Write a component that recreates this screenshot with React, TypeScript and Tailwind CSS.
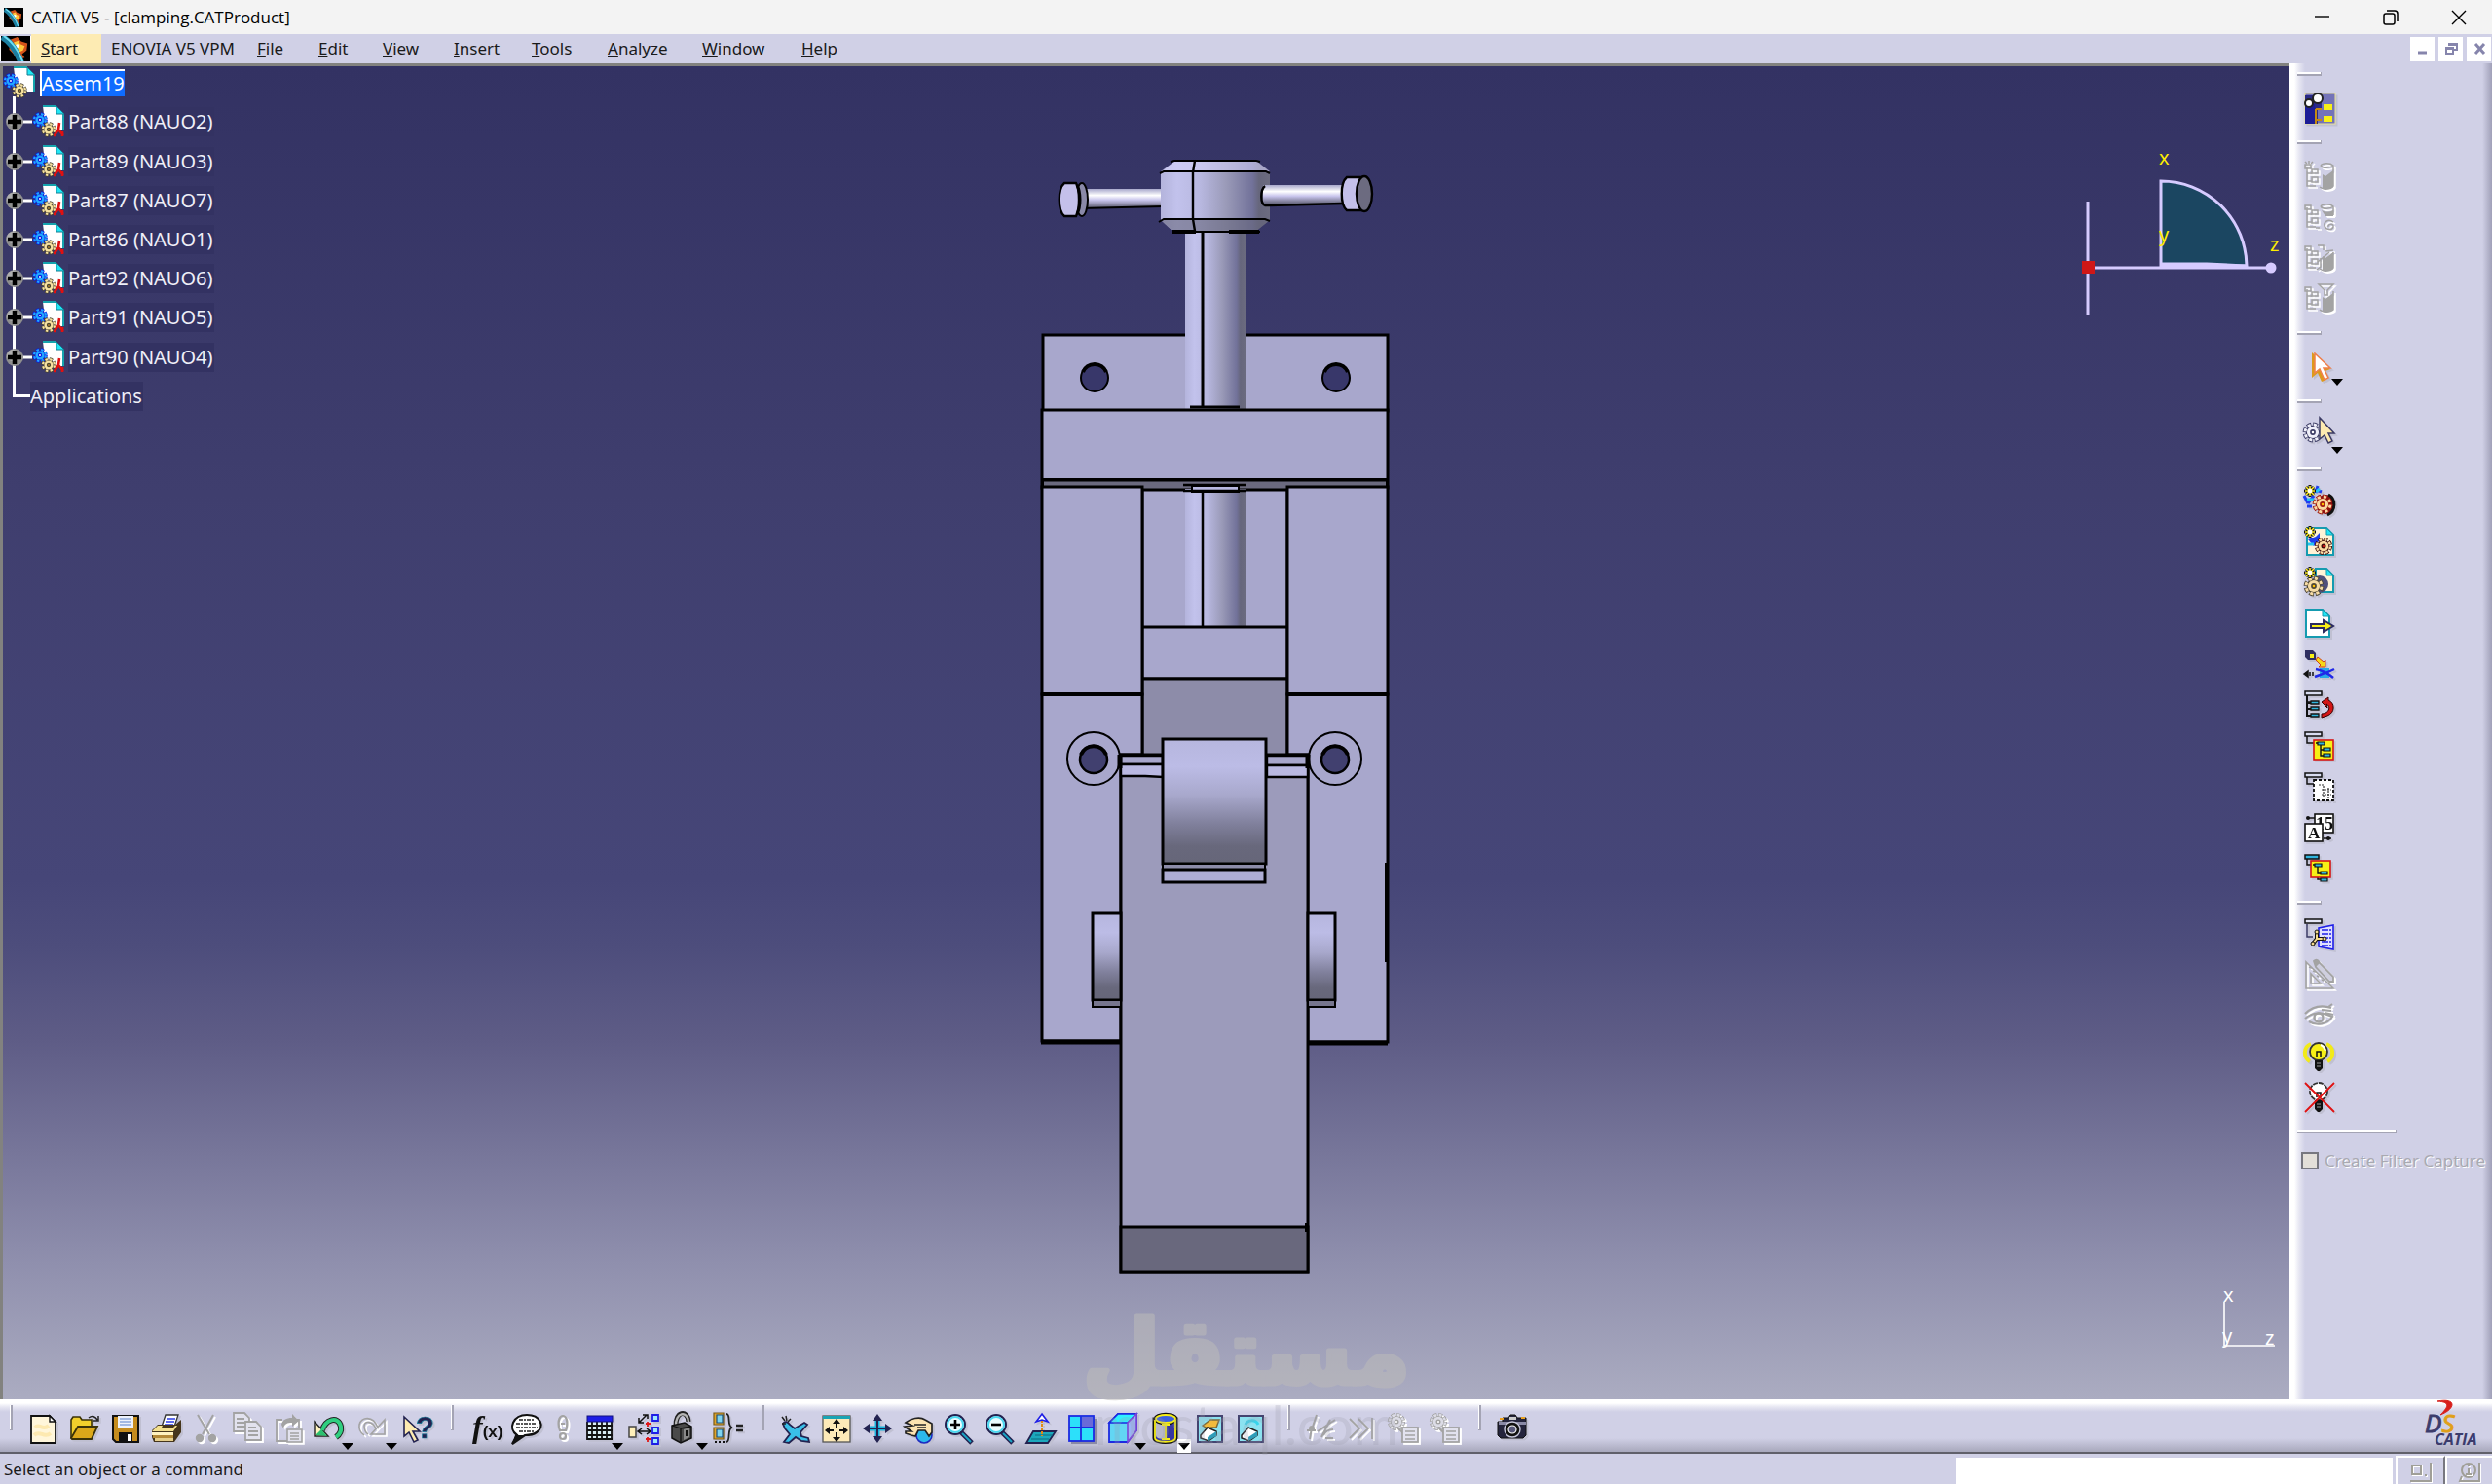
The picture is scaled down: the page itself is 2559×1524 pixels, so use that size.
import React from "react";

type Kids = { children?: React.ReactNode };

/* ---------- icon helpers ---------- */

function Icon({ children, off = false, size = 32 }: Kids & { off?: boolean; size?: number }) {
  return (
    <svg
      aria-hidden="true"
      width={size}
      height={size}
      viewBox={`0 0 ${size} ${size}`}
      fill="none"
      className={
        off
          ? "shrink-0 overflow-visible drop-shadow-[2px_2px_0_#ffffff]"
          : "shrink-0 overflow-visible drop-shadow-[2px_2px_0_#c0c0d2]"
      }
    >
      {children}
    </svg>
  );
}

function Gear({ x, y, r, fill, line, hole = "#fff" }: { x: number; y: number; r: number; fill: string; line: string; hole?: string }) {
  const t = (Math.PI * 2 * r) / 16;
  return (
    <g>
      <circle cx={x} cy={y} r={r} stroke={line} strokeWidth={r * 0.6} strokeDasharray={`${t * 1.4} ${t * 0.6}`} />
      <circle cx={x} cy={y} r={r * 0.92} fill={line} />
      <circle cx={x} cy={y} r={r} stroke={fill} strokeWidth={r * 0.36} strokeDasharray={`${t} ${t}`} strokeDashoffset={-t * 0.2} />
      <circle cx={x} cy={y} r={r * 0.76} fill={fill} />
      <circle cx={x} cy={y} r={r * 0.36} fill={line} />
      <circle cx={x} cy={y} r={r * 0.16} fill={hole} />
    </g>
  );
}

function Spark({ x, y }: { x: number; y: number }) {
  return (
    <g>
      <path d={`M${x - 6} ${y}h12M${x} ${y - 6}v12M${x - 4} ${y - 4}l8 8M${x + 4} ${y - 4}l-8 8`} stroke="#111" strokeWidth="3" />
      <path d={`M${x - 5} ${y}h10M${x} ${y - 5}v10M${x - 4} ${y - 4}l8 8M${x + 4} ${y - 4}l-8 8`} stroke="#ffee20" strokeWidth="1.6" />
      <circle cx={x} cy={y} r="2.4" fill="#fff" />
    </g>
  );
}

function SheetShape({ x, y, w, h, line = "#159bb0", fill = "#fff", fold = "#22e6f5" }: { x: number; y: number; w: number; h: number; line?: string; fill?: string; fold?: string }) {
  return (
    <g>
      <path d={`M${x} ${y}h${w - 7}l7 7v${h - 7}h${-w}z`} fill={fill} stroke={line} strokeWidth="2" />
      <path d={`M${x + w - 7} ${y}v7h7z`} fill={fold} stroke={line} strokeWidth="1" />
    </g>
  );
}

function TreeHead({ fill = "#d8dcf0" }: { fill?: string }) {
  return (
    <>
      <path d="M3 6v7h9" stroke="#111" strokeWidth="1.5" />
      <rect x="1" y="2" width="17" height="4" fill={fill} stroke="#111" strokeWidth="1.5" />
    </>
  );
}

const GREY = "#a3a3a3";

/* ---------- right tool bar icons ---------- */

const DbDisabled = ({ kind }: { kind: number }) => (
  <Icon off>
    <g stroke={GREY} strokeWidth="1.5">
      <path d="M3 6v20h9M3 13h5M3 21h5" />
      <rect x="1" y="4" width="6" height="4" />
      <rect x="8" y="9" width="6" height="4" />
      <rect x="8" y="17" width="6" height="5" />
      {kind === 0 && <path d="M5 0v3M1 1l2 2M9 1L7 3M17 5c2-3 10-3 13 0v21c-3 4-10 4-14 1M17 5c2 3 10 3 13 0" />}
      {kind === 1 && <path d="M17 5c2-3 10-3 13 0v9M17 5c2 3 10 3 13 0M30 21c-5-4-10 0-9 4s8 5 9 1-6-3-5 0M12 27h4" />}
      {kind === 2 && <path d="M14 3h6v5M14 20l12-10M22 9l8-1M17 16v9l-4 3M30 10v16c-3 4-10 4-14 1" />}
      {kind === 3 && <path d="M15 1h15l-6 6v5h-3V7zM16 27c3 3 11 3 14 0V8" />}
    </g>
    {kind !== 1 && <path d="M19 14l3 2 8-6v17c-2 2-7 3-11 2z" fill={GREY} />}
    {kind === 1 && <path d="M18 9c4 2 8 2 12 0v6h-8z" fill={GREY} />}
  </Icon>
);

const WorkbenchIcon = () => (
  <Icon>
    <rect x="1" y="1" width="31" height="31" fill="#7473b8" stroke="#e8e29a" strokeWidth="1" />
    <path d="M1 3h17v14h-4v15H1z" fill="#2a2a86" />
    <path d="M1 12h10v20H1z" fill="#1d1d96" />
    <rect x="20" y="12" width="9" height="6" fill="#f7ef16" />
    <rect x="20" y="24" width="9" height="6" fill="#f7ef16" />
    <path d="M12 17h6M12 17v15M12 28h6" stroke="#c48a12" strokeWidth="2" />
    <circle cx="14" cy="6" r="5" fill="#fff" stroke="#222" strokeWidth="2" />
    <circle cx="5" cy="11" r="4" fill="#fff" stroke="#222" strokeWidth="2" />
  </Icon>
);

const ArrowIcon = () => (
  <Icon>
    <path d="M8 1v26l6-5 4 9 5-2-4-8 8-3z" fill="#dd9a1c" />
    <path d="M11 2v20l5-4 5 11 4-2-5-10h7z" fill="#fff" stroke="#f0804c" strokeWidth="1.5" />
  </Icon>
);

const GearCursorIcon = () => (
  <Icon>
    <Gear x={9} y={13} r={8} fill="#f0f0fa" line="#3b3b64" />
    <path d="M16 -2v22l5-4 4 8 4-2-4-8h6z" fill="#fdeab0" stroke="#3b3b64" strokeWidth="1.5" />
  </Icon>
);

const rightGroupFive: [string, React.ReactNode][] = [
  ["Component", (
    <Icon>
      <path d="M14 1l-2 7M12 5l6 2M0 11l4 8M4 19l6-8M3 22h5" stroke="#1f3ff0" strokeWidth="3" />
      <path d="M3 15l7 0M12 7l4-3" stroke="#24c4f4" strokeWidth="3" />
      <circle cx="22" cy="20" r="10" fill="#8a1010" />
      <path d="M25 10c8 4 8 17-1 21" stroke="#111" strokeWidth="3" />
      <Gear x={19} y={20} r={8} fill="#fbd9a0" line="#a01a10" hole="#ffbf00" />
      <Spark x={6} y={6} />
    </Icon>
  )],
  ["Product", (
    <Icon>
      <SheetShape x={3} y={2} w={27} h={28} fill="#fff3d6" />
      <path d="M4 14l8-3 4-4v8l-6 6z" fill="#1f3ff0" />
      <path d="M4 19h6" stroke="#24c4f4" strokeWidth="3" />
      <Gear x={20} y={21} r={7} fill="#fbd9a0" line="#3a0a0a" hole="#e01818" />
      <Spark x={6} y={6} />
    </Icon>
  )],
  ["Part", (
    <Icon>
      <SheetShape x={12} y={2} w={18} h={24} fill="#fff3d6" />
      <circle cx="16" cy="18" r="9" fill="#50507a" />
      <Gear x={10} y={20} r={8} fill="#f7dca4" line="#4d4636" hole="#ffbf00" />
      <Spark x={6} y={6} />
    </Icon>
  )],
  ["Existing Component", (
    <Icon>
      <SheetShape x={2} y={2} w={24} h={28} />
      <path d="M7 17h13v-4l10 6-10 6v-4H7z" fill="#f7ef16" stroke="#2b2b60" strokeWidth="2" />
    </Icon>
  )],
  ["Existing Component With Positioning", (
    <Icon>
      <path d="M1 2h8l3 3v7H4L1 9z" fill="#2f2f60" />
      <rect x="6" y="6" width="4" height="4" fill="#f7ef16" />
      <path d="M14 9l6 5 2-2v7h-7l2-2-5-5z" fill="#f7d816" stroke="#d04018" strokeWidth="1" />
      <rect x="16" y="20" width="10" height="10" fill="#28a8e8" />
      <path d="M11 29c8-3 14-5 20-8M12 21c6 1 12 4 18 9" stroke="#1f28e8" strokeWidth="2.5" />
      <path d="M0 26l4-3v6zM6 24v4M9 24v4" fill="#111" stroke="#111" strokeWidth="1.5" />
    </Icon>
  )],
  ["Replace Component", (
    <Icon>
      <TreeHead />
      <path d="M3 6v21h5M3 14h4M3 20h4" stroke="#111" strokeWidth="2" />
      <path d="M7 12h8v3H7zM7 18h8v3H7zM7 25h8v3H7z" fill="#30b4dc" stroke="#111" strokeWidth="1.3" />
      <path d="M18 13l7-5v3c7 3 7 13-1 16l-6 2v-4c8 0 10-8 5-10l1 4z" fill="#d41616" stroke="#300" strokeWidth="1" />
    </Icon>
  )],
  ["Graph Tree Reordering", (
    <Icon>
      <TreeHead />
      <rect x="10" y="10" width="20" height="20" fill="#f7ef16" stroke="#d41616" strokeWidth="1.6" />
      <path d="M12 13h4M17 15v11h4M17 20h4" stroke="#111" strokeWidth="1.4" />
      <path d="M14 12h7v3h-7zM20 18h7v3h-7zM20 24h7v3h-7z" fill="#30b4dc" stroke="#111" strokeWidth="1.2" />
    </Icon>
  )],
  ["Generate Numbering", (
    <Icon>
      <TreeHead />
      <rect x="10" y="9" width="20" height="21" fill="#fff" stroke="#111" strokeWidth="1.8" strokeDasharray="3 2" />
      <path d="M15 14h6M18 19h10M18 24h10M20 15v12M25 17v10" stroke="#333" strokeWidth="1.2" strokeDasharray="2 1" />
    </Icon>
  )],
  ["Selective Load", (
    <Icon>
      <rect x="11" y="2" width="19" height="19" fill="#fff" stroke="#111" strokeWidth="1.6" />
      <text x="12" y="18" fontSize="18" fontWeight="700" fill="#111" fontFamily="Liberation Serif, serif">15</text>
      <path d="M3 6h8M20 27h8" stroke="#111" strokeWidth="1.4" />
      <circle cx="4" cy="6" r="2" fill="#111" />
      <circle cx="25" cy="27" r="2" fill="#111" />
      <rect x="1" y="12" width="18" height="18" fill="#fff" stroke="#111" strokeWidth="1.6" />
      <text x="4" y="27" fontSize="17" fontWeight="700" fill="#111" fontFamily="Liberation Serif, serif">A</text>
    </Icon>
  )],
  ["Manage Representations", (
    <Icon>
      <path d="M3 6v6h7M14 24v3h6" stroke="#111" strokeWidth="1.5" />
      <rect x="1" y="2" width="14" height="4" fill="#30b4dc" stroke="#111" strokeWidth="1.5" />
      <rect x="7" y="8" width="20" height="17" fill="#f7ef16" stroke="#d41616" strokeWidth="1.6" />
      <path d="M9 12h4M14 14v7h4" stroke="#111" strokeWidth="1.4" />
      <path d="M11 11h7v3h-7zM17 19h7v3h-7zM17 26h7v3h-7z" fill="#30b4dc" stroke="#111" strokeWidth="1.2" />
    </Icon>
  )],
];

const rightGroupSix: [string, React.ReactNode][] = [
  ["Constraints", (
    <Icon>
      <path d="M3 6v13h6" stroke="#3b3b64" strokeWidth="1.5" />
      <rect x="1" y="1" width="17" height="4" fill="#e4e6f6" stroke="#111" strokeWidth="1.5" />
      <path d="M30 7v25l-15-3V10z" fill="#dfe0ff" stroke="#1f20e8" strokeWidth="1.6" />
      <path d="M18 12h10M18 16h10M18 20h10M18 24h10M18 28h10" stroke="#1f20e8" strokeWidth="1.3" strokeDasharray="3 1" />
      <path d="M9 26l4-5v-7M13 21h8" stroke="#111" strokeWidth="4" />
      <path d="M9 26l4-5v-7M13 21h8" stroke="#f7dc8c" strokeWidth="2" />
      <circle cx="9" cy="26" r="2" fill="#f7dc8c" stroke="#111" />
      <circle cx="13" cy="14" r="2" fill="#f7dc8c" stroke="#111" />
      <circle cx="21" cy="21" r="2" fill="#f7dc8c" stroke="#111" />
    </Icon>
  )],
  ["Measure", (
    <Icon off>
      <path d="M2 3v27h28zM7 15v10h10z" stroke={GREY} strokeWidth="1.6" />
      <path d="M10 2c3-3 5 0 6 2l14 14v5h-4L12 8z" fill="#cfcfdf" stroke={GREY} strokeWidth="1.8" />
      <path d="M10 2c3-3 5 0 6 2l-4 4z" fill={GREY} />
      <path d="M5 8l3 1M9 12l3 1M13 17l2 1M18 21l2 1" stroke={GREY} strokeWidth="1.4" />
    </Icon>
  )],
  ["View Visibility", (
    <Icon off>
      <path d="M1 14c8-8 18-9 27-6M1 19c8-7 16-7 28-2-5 8-16 10-24 5" stroke={GREY} strokeWidth="2.2" />
      <circle cx="15" cy="18" r="4.5" stroke={GREY} strokeWidth="2.4" />
      <path d="M18 10l10 1M21 13l9 2M25 7l4-3" stroke={GREY} strokeWidth="2" />
    </Icon>
  )],
  ["Show Light", (
    <Icon>
      <path d="M7 3C-1 6-1 17 6 21M23 3c8 3 8 14 1 18" stroke="#f2ea18" strokeWidth="4" />
      <circle cx="15" cy="11" r="9" fill="#f7ef16" stroke="#333" strokeWidth="1.8" />
      <path d="M13 17v-6h4v6" stroke="#111" strokeWidth="1.5" />
      <path d="M17 4c3 1 4 3 5 6" stroke="#fff" strokeWidth="2" />
      <path d="M11 20h8v8l-3 3h-2l-3-3z" fill="#111" />
      <path d="M13 23h4M13 26h4" stroke="#999" />
    </Icon>
  )],
  ["Hide Light", (
    <Icon>
      <circle cx="15" cy="10" r="9" fill="#fff" stroke="#333" strokeWidth="1.8" strokeDasharray="5 1" />
      <path d="M13 16v-5h4v5" stroke="#111" strokeWidth="1.5" />
      <path d="M11 19h8v9l-3 3h-2l-3-3z" fill="#111" />
      <path d="M13 23h4M13 26h4" stroke="#999" />
      <path d="M1 1l30 30M31 1L1 31" stroke="#e01212" strokeWidth="1.8" />
    </Icon>
  )],
];

/* ---------- bottom tool bar icons ---------- */

const Caret = ({ boxed = false }: { boxed?: boolean }) => (
  <svg aria-hidden="true" viewBox="0 0 14 14" className={boxed ? "absolute -right-[7px] top-[29px] size-[14px] bg-white" : "absolute -right-[7px] top-[29px] size-[14px]"}>
    <path d="M1 4h12L7 11z" fill="#000" />
  </svg>
);

const Lens = ({ plus }: { plus: boolean }) => (
  <Icon>
    <path d="M18 19l11 11" stroke="#222250" strokeWidth="5" />
    <path d="M19 20l9 9" stroke="#19a4c4" strokeWidth="2" />
    <circle cx="12" cy="11" r="10" fill="#eafcff" stroke="#222250" strokeWidth="2" />
    <circle cx="12" cy="11" r="8" stroke="#49d8f0" strokeWidth="2" />
    <path d={plus ? "M7 11h10M12 6v10" : "M7 11h10"} stroke="#000" strokeWidth="2.6" />
  </Icon>
);

const Doc = ({ x, y }: { x: number; y: number }) => (
  <g stroke={GREY} strokeWidth="1.8">
    <path d={`M${x} ${y}h11l5 5v14h-16z`} fill="#e2e2ee" />
    <path d={`M${x + 3} ${y + 6}h8M${x + 3} ${y + 10}h10M${x + 3} ${y + 14}h10`} />
  </g>
);

const GearDocOff = ({ x }: { x: number }) => (
  <Icon off>
    <Gear x={9 + x} y={8} r={7} fill="#dcdce6" line={GREY} />
    <path d="M10 14l6 6" stroke={GREY} strokeWidth="2" />
    <rect x="15" y="14" width="16" height="15" fill="#e2e2ee" stroke={GREY} strokeWidth="1.8" />
    <path d="M18 18h10M18 22h10M18 26h10" stroke={GREY} strokeWidth="1.6" />
  </Icon>
);

type Tool = { name: string; icon: React.ReactNode; caret?: boolean; boxed?: boolean; off?: boolean; slim?: boolean };

const bottomGroups: Tool[][] = [
  [
    { name: "New", icon: <Icon><path d="M3 2h19l6 6v22H3z" fill="#fff6da" stroke="#111" strokeWidth="1.8" /><path d="M22 2v6h6z" fill="#fff" stroke="#111" strokeWidth="1.4" /><path d="M7 14c4-5 8 4 14-2M6 22c6-6 10 4 17-2" stroke="#fde9b0" strokeWidth="4" /></Icon> },
    { name: "Open", icon: <Icon><path d="M2 25V6l2-3h7l2 3h10v7" fill="#f1cf2c" stroke="#3a3208" strokeWidth="1.6" /><path d="M2 25l7-12h20l-6 13H3z" fill="#dba81a" stroke="#3a3208" strokeWidth="1.8" /><path d="M20 4c4-3 7-1 9 2M30 2v5h-5" stroke="#222" strokeWidth="1.5" /></Icon> },
    { name: "Save", icon: <Icon><path d="M3 2h26v27H6l-3-3z" fill="#c58c1e" stroke="#111" strokeWidth="2" /><rect x="8" y="2" width="16" height="12" fill="#eef2fb" /><path d="M10 5h12M10 8h12M10 11h12" stroke="#8aa6dc" strokeWidth="1.3" /><rect x="9" y="19" width="14" height="10" fill="#111" /><rect x="18" y="21" width="4" height="7" fill="#fff" /></Icon> },
    { name: "Print", icon: <Icon><path d="M11 13L15 1h13l-4 12z" fill="#fff" stroke="#333" strokeWidth="1.3" /><path d="M16 5h9M15 8h9M14 11h9" stroke="#2d3ce8" strokeWidth="1.6" /><path d="M1 17l6-6h18l6-5v13l-7 10H3l-2-5z" fill="#45351c" /><path d="M1 18l6-6h5l-1 2h12l2-2h2l-4 6z" fill="#f3df8e" /><path d="M1 19h22v3H1z" fill="#fff2c0" /><path d="M2 22h21v3H2z" fill="#b58a38" /><path d="M4 25h19v3H4z" fill="#e6cf8c" /></Icon> },
    { name: "Cut", off: true, icon: <Icon off><path d="M6 1l12 20M22 1L11 21" stroke={GREY} strokeWidth="2" /><circle cx="8" cy="25" r="3" fill={GREY} stroke={GREY} strokeWidth="2.4" /><circle cx="21" cy="25" r="3" fill={GREY} stroke={GREY} strokeWidth="2.4" /></Icon> },
    { name: "Copy", off: true, icon: <Icon off><Doc x={1} y={-1} /><Doc x={13} y={8} /></Icon> },
    { name: "Paste", off: true, icon: <Icon off><path d="M14 28H3V6h6M20 6h6v8" stroke={GREY} strokeWidth="1.8" /><path d="M8 11c1-5 5-7 11-7V0l7 7-7 6V9c-5 0-8 1-9 6z" fill={GREY} /><rect x="14" y="16" width="15" height="13" fill="#e2e2ee" stroke={GREY} strokeWidth="1.6" /><path d="M17 20h9M17 23h9M17 26h9" stroke={GREY} strokeWidth="1.3" /></Icon> },
    { name: "Undo", caret: true, icon: <Icon><path d="M8 17c3-11 16-16 19-4 1 6-2 9-5 11" stroke="#222" strokeWidth="6" /><path d="M0 8l14 15H0z" fill="#fff3c0" stroke="#222" strokeWidth="1.4" /><path d="M1 22l12 1-6-7z" fill="#2bc070" /><path d="M8 17c3-11 16-16 19-4 1 6-2 9-5 11" stroke="#2fcf80" strokeWidth="4" /></Icon> },
    { name: "Redo", caret: true, off: true, icon: <Icon off><path d="M20 14C15 1 3 3 1 11c-1 6 2 9 5 11M18 15C14 7 7 7 6 12c0 4 1 7 4 9M27 6v15H13z" stroke={GREY} strokeWidth="1.6" /></Icon> },
    { name: "What's This?", icon: <Icon><path d="M2 3v20l5-4 5 10 4-2-5-9h7z" fill="#fdeab0" stroke="#222250" strokeWidth="1.6" /><text x="14" y="25" fontSize="31" fontWeight="700" fill="#222250" stroke="#19809c" strokeWidth="0.7" fontFamily="Liberation Sans, sans-serif">?</text></Icon> },
  ],
  [
    { name: "Formula", icon: <Icon><text x="3" y="24" fontSize="32" fontStyle="italic" fontWeight="700" fill="#111" fontFamily="Liberation Serif, serif">f<tspan fontSize="17" fontStyle="normal" fontFamily="Liberation Sans, sans-serif">(x)</tspan></text></Icon> },
    { name: "Comment", icon: <Icon><path d="M7 22C-3 15 3 1 17 1s19 12 10 18c-4 3-9 3-12 3L2 31z" fill="#fff" stroke="#111" strokeWidth="2.2" /><path d="M2 31l3-9 10 0z" fill="#111" /><path d="M9 6h16M6 10h21M6 14h22M9 18h16" stroke="#222" strokeWidth="1.7" strokeDasharray="4 1 2 1" /></Icon> },
    { name: "Check", off: true, slim: true, icon: <Icon off><path d="M8 14c-3-16 11-16 8 0l-1 3H9zM10 10h4" stroke={GREY} strokeWidth="2.2" /><circle cx="12" cy="23" r="3" stroke={GREY} strokeWidth="2.2" /></Icon> },
    { name: "Design Table", caret: true, icon: <Icon><rect x="3" y="2" width="25" height="25" fill="#d9ecf4" /><path d="M3 8v19M8 8v19M13 8v19M18 8v19M23 8v19M28 8v19M3 12h26M3 17h26M3 22h26M3 26h26" stroke="#111" strokeWidth="1.8" /><rect x="3" y="2" width="26" height="6" fill="#1d1de6" stroke="#12127c" /></Icon> },
    { name: "Knowledge Inspector", icon: <Icon><rect x="1" y="13" width="7" height="11" fill="#fff0b8" stroke="#444" strokeWidth="1.5" /><path d="M10 18h12M14 15l-4 3 4 3M19 15l4 3-4 3M11 9l8-8M11 4v5h5M15 1h5v4" stroke="#111" strokeWidth="1.5" /><path d="M18 10h5M20 8v5M18 26h5M20 24v5" stroke="#e01818" strokeWidth="1.8" /><path d="M25 1h6v6h-6zM25 14h6v6h-6zM25 25h6v6h-6z" fill="#9ee8ff" stroke="#1d1de6" strokeWidth="1.8" /></Icon> },
    { name: "Lock", caret: true, icon: <Icon><path d="M7 13C6-3 19-5 20 8" stroke="#222" strokeWidth="5" /><path d="M7 13C6-2 19-4 20 8" stroke="#b4b4b4" strokeWidth="2.4" /><path d="M3 12l13-3 7 4v12l-11 5-9-5z" fill="#4a4a4a" stroke="#111" strokeWidth="1.5" /><path d="M3 12l9 3v15M12 15l11-2" stroke="#111" strokeWidth="1.3" /><path d="M15 16l6-2v10l-6 3z" fill="#888" /><path d="M18 17v6" stroke="#111" strokeWidth="2" /></Icon> },
    { name: "Parameters", icon: <Icon><path d="M1 -1h10v12H1zM1 14h10v12H1z" fill="#e0a42a" stroke="#7a5a14" strokeWidth="1.2" /><path d="M4 1h6v8H4zM4 16h6v8H4z" fill="#7fd4ee" stroke="#1a4e7c" strokeWidth="1.2" /><path d="M2 29h2M6 29h2M10 29h2" stroke="#111" strokeWidth="2" /><path d="M14 0c5 0 0 13 6 14-6 1-1 14-6 15" stroke="#222" strokeWidth="1.8" /><path d="M24 12h7M24 17h7" stroke="#222" strokeWidth="2.4" /></Icon> },
  ],
  [
    { name: "Fly Mode", icon: <Icon><path d="M3 10c2-3 5-2 7 1l5 4 10-6 3 2-7 8 1 4 7 2 1 4-8-1-6-4-7 6-5-1 6-8-5-6z" fill="#39bfe8" stroke="#222250" strokeWidth="1.8" /><path d="M2 3l3 4M6 2l1 5M11 5L8 8M2 10h4" stroke="#222" strokeWidth="1.5" /></Icon> },
    { name: "Fit All In", icon: <Icon><rect x="2" y="2" width="28" height="27" fill="#fdeab8" stroke="#555" strokeWidth="1.3" /><path d="M2 2h28v3H2z" fill="#19a4b4" /><path d="M16 8v7M16 19v7M6 17h7M19 17h7" stroke="#111" strokeWidth="2" /><path d="M16 5l4 5h-8zM16 29l4-5h-8zM4 17l5-4v8zM28 17l-5-4v8z" fill="#111" /></Icon> },
    { name: "Pan", icon: <Icon><path d="M16 5v20M6 15h20" stroke="#19b4dc" strokeWidth="5" /><path d="M16 5v20M6 15h20" stroke="#222250" strokeWidth="2" /><path d="M16 0l5 7H11zM16 30l5-7H11zM1 15l7-5v10zM31 15l-7-5v10z" fill="#222250" /></Icon> },
    { name: "Rotate", icon: <Icon><circle cx="22" cy="22" r="8" fill="#2cb8ec" stroke="#1d2ac0" strokeWidth="1.6" /><path d="M3 9c5-4 14-7 20-3l7 4v9l-3 4-4-6h-7l-3 6-4-1-6-2v-2h6l-7-5 8-1z" fill="#fde4b0" stroke="#222" strokeWidth="1.7" /><path d="M12 11h12M15 14h9" stroke="#222" strokeWidth="1.3" /></Icon> },
    { name: "Zoom In", icon: <Lens plus /> },
    { name: "Zoom Out", icon: <Lens plus={false} /> },
    { name: "Normal View", icon: <Icon><path d="M8 18h23l-8 12H1z" fill="#1ca8bc" stroke="#222250" strokeWidth="1.8" /><path d="M6 26h18M10 22h18" stroke="#0d6c80" /><path d="M17 6v17" stroke="#e08a12" strokeWidth="2" strokeDasharray="3 1" /><path d="M17 0l6 8-6-2-6 2z" fill="#fff" stroke="#1d1de6" strokeWidth="1.6" /></Icon> },
    { name: "Create Multi-View", icon: <Icon><rect x="5" y="5" width="26" height="26" fill="#8a8aa6" /><rect x="3" y="2" width="25" height="26" fill="#2ce0fa" stroke="#1d2ae0" strokeWidth="1.8" /><rect x="16" y="3" width="11" height="12" fill="#6a6ad8" /><path d="M15 2v26M3 14h25" stroke="#1d2ae0" strokeWidth="1.8" /></Icon> },
    { name: "Isometric View", caret: true, icon: <Icon><path d="M2 9L11 0h19v17l-9 12H2z" fill="#62d6f4" stroke="#1d2ae0" strokeWidth="1.8" /><path d="M2 9L11 0h19l-9 9z" fill="#2ff0ff" stroke="#1d2ae0" strokeWidth="1.6" /><path d="M21 9v20l9-12V0z" fill="#9ab4f4" stroke="#7c46d8" strokeWidth="1.6" /></Icon> },
    { name: "Shading With Edges", caret: true, boxed: true, icon: <Icon><path d="M3 5v20c0 6 23 6 23 0V5z" fill="#3636a0" stroke="#111" strokeWidth="3" /><path d="M5 8h9v18c-5 0-9-1-9-4z" fill="#b8b8c8" /><ellipse cx="15" cy="5" rx="11" ry="5" fill="#3a5ee0" stroke="#111" strokeWidth="2.4" /><ellipse cx="15" cy="5" rx="10" ry="4" stroke="#f7ef16" strokeWidth="1.8" /><path d="M4 6v19c0 5 21 5 21 0V6M15 10v17M11 11h8M11 26h8" stroke="#f7ef16" strokeWidth="1.8" /></Icon> },
    { name: "Hide/Show", icon: <Icon><rect x="3" y="2" width="25" height="27" fill="#8ce2f0" stroke="#444470" strokeWidth="2" /><path d="M8 12l8-6h9l-3 8H11z" fill="#f2ba3c" stroke="#7a6a3c" strokeWidth="1.5" /><path d="M6 22l7-8 9 4v4l-8 6-8-3z" fill="#fff" stroke="#222" strokeWidth="1.5" /><path d="M13 24l9-6v5l-9 5z" fill="#2f9cb8" /></Icon> },
    { name: "Swap Visible Space", icon: <Icon><rect x="3" y="2" width="25" height="27" fill="#8ce2f0" stroke="#444470" strokeWidth="2" /><path d="M10 11c2-5 10-6 13 0" stroke="#38d4ec" strokeWidth="3" /><path d="M6 22l7-8 9 4v4l-8 6-8-3z" fill="#fff" stroke="#222" strokeWidth="1.5" /><path d="M13 24l9-6v5l-9 5z" fill="#2f9cb8" /></Icon> },
  ],
  [
    { name: "Simulate", off: true, icon: <Icon off><path d="M11 1L7 13M1 17h9M6 14l-2 12M16 24L25 6M12 18L30 6M18 22c2-4 5-6 10-6M20 25h8" stroke={GREY} strokeWidth="2" /><circle cx="6" cy="15" r="3" fill={GREY} /></Icon> },
    { name: "Skip To End", off: true, icon: <Icon off><path d="M3 5l10 10L3 25M12 5l10 10-10 10M26 4v22" stroke={GREY} strokeWidth="1.8" /></Icon> },
    { name: "Gear Report", off: true, icon: <GearDocOff x={0} /> },
    { name: "Gear List", off: true, icon: <GearDocOff x={1} /> },
  ],
  [
    { name: "Capture", icon: <Icon><path d="M1 8h5V4h6l2-3h5l2 3h9v18l-3 3H4l-3-3z" fill="#24243c" stroke="#111" strokeWidth="1" /><path d="M2 8h28v3H2z" fill="#8a8aa6" /><path d="M13 3h7v3h-7z" fill="#ccc" /><path d="M3 5h4M25 4h4" stroke="#e8a020" strokeWidth="2" /><circle cx="16" cy="16" r="8" fill="#111" stroke="#c8c8dc" strokeWidth="1.4" /><circle cx="16" cy="16" r="4" fill="#555578" stroke="#fff" strokeWidth="1.2" /></Icon> },
  ],
];

const Grip = ({ wide = false }: { wide?: boolean }) => (
  <div className={wide ? "h-1 w-[102px] shrink-0 border-b-2 border-r border-[#a4a4b4] bg-white" : "h-1 w-[25px] shrink-0 border-b-2 border-r border-[#a4a4b4] bg-white"} />
);

const SideButton = ({ name, children, off = false, caret = false }: Kids & { name: string; off?: boolean; caret?: boolean }) => (
  <button type="button" aria-label={name} disabled={off} className="relative flex h-[42px] w-[34px] items-center">
    {children}
    {caret && <Caret />}
  </button>
);

function Swoosh() {
  return (
    <>
      <rect width="32" height="32" fill="#000" />
      <path d="M10 6l8-3 4 5 7 2-1 8-5 4 3 4-8 2-5-7-4-4z" fill="#d4541a" />
      <path d="M14 9l5-2 2 4 5 2-2 5-5 2-4-3z" fill="#ffc83c" />
      <circle cx="18" cy="13" r="2" fill="#fff" />
      <path d="M1 3c8 4 15 13 21 28" stroke="#1c7ea0" strokeWidth="7" fill="none" />
      <path d="M3 2c8 5 15 13 21 29" stroke="#6ce0f4" strokeWidth="2" fill="none" />
    </>
  );
}

/* ---------- specification tree ---------- */

const parts = [
  "Part88 (NAUO2)",
  "Part89 (NAUO3)",
  "Part87 (NAUO7)",
  "Part86 (NAUO1)",
  "Part92 (NAUO6)",
  "Part91 (NAUO5)",
  "Part90 (NAUO4)",
];

function NodeIcon({ part }: { part: boolean }) {
  return (
    <svg aria-hidden="true" width="34" height="34" viewBox="0 0 34 34" fill="none" className="shrink-0">
      <path d="M11 1h14l8 8v17H14z" fill="#fff" />
      <path d="M11 1h14M32 9v17" stroke="#16a4ae" strokeWidth="2" />
      <path d="M25 1v8h8z" fill="#22e6f5" stroke="#127c90" strokeWidth="1" />
      <Gear x={8} y={15} r={6} fill="#22a8ff" line="#0a1ce0" />
      <Gear x={17} y={25} r={6} fill="#f7e2a0" line="#4a4330" hole="#b08830" />
      {part && <path d="M28 18l-1 7-4 6M27 25l5 6M22 31h3M31 27v5" stroke="#e01010" strokeWidth="2.6" />}
    </svg>
  );
}

function SpecTree() {
  return (
    <ul aria-label="Specification tree" className="absolute -top-[3px] left-0 grid h-[362px] auto-rows-fr text-[20px] leading-[30px] text-[#efeff8]">
      <li aria-hidden="true" className="absolute left-[10px] top-[34px] h-[309px] w-[3px] bg-white" />
      <li className="relative flex items-center">
        <NodeIcon part={false} />
        <span className="ml-[4px] border-l-2 border-t-2 border-white bg-[#0f6cff] leading-[26px] text-white">Assem19</span>
      </li>
      {parts.map((p) => (
        <li key={p} className="relative flex items-center">
          <button type="button" aria-label={`Expand ${p}`} className="ml-[2px] h-[20px] w-[28px]">
            <svg aria-hidden="true" width="28" height="20" viewBox="0 0 28 20">
              <path d="M18 10h10" stroke="#fff" strokeWidth="3" />
              <circle cx="10" cy="10" r="9" fill="#8e8e8e" />
              <circle cx="8" cy="8" r="6" fill="#aeaeae" />
              <path d="M3 10h14M10 3v14" stroke="#000" strokeWidth="4.5" />
            </svg>
          </button>
          <NodeIcon part />
          <span className="ml-[3px] bg-[#333262] pr-px">{p}</span>
        </li>
      ))}
      <li className="relative flex items-center">
        <span aria-hidden="true" className="ml-[10px] h-[3px] w-[18px] bg-white" />
        <span className="bg-[#333262] pr-px">Applications</span>
      </li>
    </ul>
  );
}

/* ---------- 3D model ---------- */

const FACE = "#a8a7cc";

function Model() {
  return (
    <svg role="img" aria-label="Clamping assembly" viewBox="887 140 580 1180" className="mx-auto mt-[72px] h-[1180px] w-[580px]" fill="none" stroke="#000" strokeWidth="3">
      <defs>
        <linearGradient id="stem">
          <stop offset="0" stopColor="#b4b4dc" />
          <stop offset="0.15" stopColor="#c2c2ec" />
          <stop offset="0.36" stopColor="#b8b8e0" />
          <stop offset="0.6" stopColor="#9a9ab8" />
          <stop offset="0.84" stopColor="#72729a" />
          <stop offset="0.9" stopColor="#66667c" />
          <stop offset="1" stopColor="#6c6c80" />
        </linearGradient>
        <linearGradient id="rod" x1="0" y1="0" x2="0" y2="1">
          <stop offset="0" stopColor="#a8a8cc" />
          <stop offset="0.35" stopColor="#ffffff" />
          <stop offset="0.6" stopColor="#c8c4ec" />
          <stop offset="1" stopColor="#66667c" />
        </linearGradient>
        <linearGradient id="drum" x1="0" y1="0" x2="0" y2="1">
          <stop offset="0" stopColor="#b6b6de" />
          <stop offset="0.22" stopColor="#bcbce6" />
          <stop offset="0.45" stopColor="#a8a8cc" />
          <stop offset="0.68" stopColor="#80809c" />
          <stop offset="0.86" stopColor="#68687c" />
          <stop offset="1" stopColor="#666679" />
        </linearGradient>
      </defs>

      <rect x="1071" y="344" width="354" height="78" fill={FACE} />
      <g fill="#38376a" strokeWidth="2">
        <circle cx="1124" cy="388" r="14" />
        <circle cx="1372" cy="388" r="14" />
      </g>
      <path d="M1112 382a13 13 0 0 1 24 0M1360 382a13 13 0 0 1 24 0" strokeWidth="4" />

      <rect x="1217" y="236" width="63" height="184" fill="url(#stem)" stroke="none" />
      <path d="M1235 236v183" />

      <rect x="1108" y="194" width="90" height="19" fill="url(#rod)" stroke="none" />
      <path d="M1110 214l84-2" strokeWidth="2" />
      <ellipse cx="1111" cy="205" rx="6" ry="17" fill="#8a89a8" strokeWidth="2" />
      <path d="M1093 188h12c4 8 4 26 0 34h-12c-7-6-7-28 0-34z" fill="#c4c0ea" strokeWidth="2.4" />
      <path d="M1106 190c4 8 4 22 0 30" strokeWidth="3" />

      <path d="M1207 165h83l14 12v49l-15 12h-84l-13-12v-49z" fill="url(#stem)" stroke="none" />
      <path d="M1207 165h83l14 11h-112z" fill="#d6d2fa" fillOpacity="0.6" stroke="none" />
      <path d="M1192 226h112l-15 12h-84z" fill="#66667c" fillOpacity="0.6" stroke="none" />
      <path d="M1202 166l4-1h84l4 1M1191 178l4-2h105l4 2M1190 228l5-3h104l5 2M1203 238h91" strokeWidth="2" />
      <path d="M1203 238h25M1262 238h31" strokeWidth="4" />
      <path d="M1227 165l-2 12v48l2 12" strokeWidth="2.4" />

      <rect x="1297" y="190" width="84" height="19" fill="url(#rod)" stroke="none" />
      <path d="M1299 191c-5 4-5 18 0 20h4l76-2" strokeWidth="2.4" />
      <path d="M1383 182h20v34h-20c-7-6-7-28 0-34z" fill="#c4c0ea" strokeWidth="2.4" />
      <ellipse cx="1401" cy="199" rx="8" ry="18" fill="#6c6b80" strokeWidth="2.4" />

      <rect x="1070" y="421" width="355" height="80" fill={FACE} />
      <rect x="1071" y="492" width="353" height="12" fill="#6b6a7f" strokeWidth="2" />
      <path d="M1222 418h51M1070 493h355" />

      <rect x="1173" y="503" width="149" height="142" fill={FACE} />
      <rect x="1217" y="502" width="63" height="142" fill="url(#stem)" stroke="none" />
      <rect x="1224" y="499" width="48" height="6" fill="#b8b8e0" strokeWidth="2" />
      <path d="M1235 504v140M1215 498h65M1215 504h65" strokeWidth="2.5" />
      <path d="M1173 626v18h149v-18" stroke="none" />
      <path d="M1173 644h149v53h-149z" fill={FACE} />
      <path d="M1173 697h149v79h-149z" fill="#8d8ca9" />
      <path d="M1070 500h103v213h-103zM1322 500h103v213h-103z" fill={FACE} />
      <path d="M1070 713h103v62h-22v294h-81zM1322 713h103v357h-82V775h-21z" fill={FACE} />
      <path d="M1070 713h103M1322 713h103" strokeWidth="4" />
      <path d="M1069 1070h82M1343 1071h82" strokeWidth="5" />
      <path d="M1424 886v102" strokeWidth="4" />

      <g fill={FACE} strokeWidth="2">
        <circle cx="1123" cy="779" r="27" />
        <circle cx="1371" cy="779" r="27" />
      </g>
      <g fill="#41406f" strokeWidth="2.5">
        <circle cx="1123" cy="780" r="14" />
        <circle cx="1371" cy="780" r="14" />
      </g>
      <path d="M1110 775a14 14 0 0 1 26 0M1358 775a14 14 0 0 1 26 0" strokeWidth="4" />

      <path d="M1151 775h192v531h-192z" fill="#9c9bbb" />
      <path d="M1151 776h43v9h-43zM1301 776h42v10h-42z" fill="#a8a7cc" strokeWidth="2.4" />
      <path d="M1151 785h43v13l-18-1h-25zM1301 786h42v12h-42z" fill="#bab9e2" strokeWidth="2.4" />
      <path d="M1150 775v14M1343 775v14" strokeWidth="5" />
      <rect x="1194" y="759" width="106" height="128" fill="url(#drum)" />
      <rect x="1194" y="887" width="105" height="6" fill="#8d8ca9" strokeWidth="2" />
      <rect x="1194" y="893" width="105" height="13" fill="#aeadd4" />

      <path d="M1122 938h29v89h-29zM1343 938h28v89h-28z" fill="url(#drum)" />
      <path d="M1122 1027h29v7h-29zM1343 1027h28v7h-28z" fill="#77768e" strokeWidth="2" />

      <rect x="1151" y="1260" width="192" height="46" fill="#69687d" />
      <path d="M1342 1256v9" strokeWidth="4" />
    </svg>
  );
}

function Compass() {
  return (
    <svg role="img" aria-label="Compass" viewBox="2131 140 220 190" className="absolute right-0 top-[72px] h-[190px] w-[220px]" fill="none" stroke="#d6cbff" strokeWidth="3">
      <path d="M2219 273V186a88 88 0 0 1 88 87z" fill="#1b4661" />
      <path d="M2220 271h46l40 2" />
      <path d="M2144 207v117M2144 275h188" />
      <circle cx="2332" cy="275" r="4" fill="#d6cbff" />
      <rect x="2138" y="268" width="13" height="13" fill="#cf1717" stroke="none" />
      <g fill="#ffee00" stroke="none" fontSize="20" fontFamily="Noto Sans, sans-serif">
        <text x="2217" y="169">x</text>
        <text x="2217" y="248">y</text>
        <text x="2331" y="258">z</text>
      </g>
    </svg>
  );
}

function AxisTriad() {
  return (
    <svg role="img" aria-label="Axis system" viewBox="2271 1300 80 100" className="absolute bottom-[37px] right-0 h-[100px] w-[80px]" fill="none" stroke="#fff" strokeWidth="1.6">
      <path d="M2284 1337v45h52" />
      <g fill="#fff" stroke="none" fontSize="20" fontFamily="Noto Sans, sans-serif">
        <text x="2283" y="1337">x</text>
        <text x="2282" y="1379">y</text>
        <text x="2326" y="1381">z</text>
      </g>
    </svg>
  );
}

/* ---------- window ---------- */

const menus: [string, string][] = [
  ["Start", "w-[72px] bg-[#fdebb3]"],
  ["ENOVIA V5 VPM", "w-[150px]"],
  ["File", "w-[63px]"],
  ["Edit", "w-[66px]"],
  ["View", "w-[73px]"],
  ["Insert", "w-[80px]"],
  ["Tools", "w-[78px]"],
  ["Analyze", "w-[97px]"],
  ["Window", "w-[102px]"],
  ["Help", "w-[60px]"],
];

export default function App() {
  return (
    <div className="relative flex h-screen flex-col overflow-hidden bg-[#d0d0e6] font-['Noto_Sans','Open_Sans',sans-serif] text-[#1a1a1a]">
      <header className="flex h-[35px] shrink-0 items-center bg-[#f3f3f3] pl-1">
        <svg aria-hidden="true" width="20" height="20" viewBox="0 0 32 32"><Swoosh /></svg>
        <h1 className="ml-2 font-['Open_Sans',sans-serif] text-[17px] text-black">CATIA V5 - [clamping.CATProduct]</h1>
        <div className="ml-auto flex h-full">
          <button type="button" aria-label="Minimize" className="flex w-[70px] items-center justify-center"><svg width="16" height="16" fill="none" stroke="#000" strokeWidth="1.4"><path d="M0 7h15" /></svg></button>
          <button type="button" aria-label="Restore" className="flex w-[70px] items-center justify-center"><svg width="16" height="16" fill="none" stroke="#000" strokeWidth="1.5"><rect x="1" y="4" width="11" height="11" rx="2" /><path d="M4 1h8q3 0 3 3v8" /></svg></button>
          <button type="button" aria-label="Close" className="flex w-[69px] items-center justify-center"><svg width="16" height="16" fill="none" stroke="#000" strokeWidth="1.4"><path d="M1 1l14 14M15 1L1 15" /></svg></button>
        </div>
      </header>

      <nav aria-label="Main menu" className="flex h-[30px] shrink-0 items-center">
        <svg aria-hidden="true" width="32" height="26" viewBox="0 2 32 28" preserveAspectRatio="none" className="border-x border-white"><Swoosh /></svg>
        {menus.map(([label, cls], i) => (
          <button key={label} type="button" className={`${cls} h-full whitespace-nowrap pb-px pl-[10px] text-left text-[17px]`}>
            {i === 1 ? label : <><span className="underline underline-offset-2">{label[0]}</span>{label.slice(1)}</>}
          </button>
        ))}
        <div className="ml-auto flex gap-1 pr-px">
          {["Minimize document", "Restore document", "Close document"].map((l, i) => (
            <button key={l} type="button" aria-label={l} className="flex size-[25px] items-center justify-center bg-white">
              <svg width="14" height="14" fill="none" stroke="#8685ac" strokeWidth="2">
                {i === 0 && <path d="M2 11h9" strokeWidth="3" />}
                {i === 1 && <path d="M5 4V2h8v6h-3M2 6h7v6H2zM2 7h7M5 3h8" />}
                {i === 2 && <path d="M3 2l9 10M12 2L3 12" strokeWidth="3" />}
              </svg>
            </button>
          ))}
        </div>
      </nav>

      <div className="flex min-h-0 flex-1">
        <main className="relative min-w-0 flex-1 border-l-[3px] border-t-[3px] border-[#82827f] bg-[linear-gradient(to_bottom,#333263_0%,#3f3e6e_32%,#464678_61%,#4d4d7c_66%,#5e5c86_73%,#9090ae_90%,#abacc1_100%)]">
          <Model />
          <SpecTree />
          <Compass />
          <AxisTriad />
        </main>

        <aside aria-label="Product structure tools" className="flex w-[208px] shrink-0 flex-col bg-[linear-gradient(to_right,#ffffff_0px,#ffffff_5px,#e6e6f2_10px,#d0d0e6_16px,#d0d0e6_198px,#a0a0b8_208px)] pl-2 pt-[9px]">
          <Grip />
          <div className="py-[12px] pl-[7px]"><SideButton name="Workbench"><WorkbenchIcon /></SideButton></div>
          <Grip />
          <div className="py-[12px] pl-[7px]">
            {[0, 1, 2, 3].map((k) => <SideButton key={k} name={`Catalog tool ${k + 1}`} off><DbDisabled kind={k} /></SideButton>)}
          </div>
          <Grip />
          <div className="py-[12px] pl-[7px]"><SideButton name="Select" caret><ArrowIcon /></SideButton></div>
          <Grip />
          <div className="py-[12px] pl-[7px]"><SideButton name="Selection sets" caret><GearCursorIcon /></SideButton></div>
          <Grip />
          <div className="pb-[12px] pl-[7px] pt-[9px]">
            {rightGroupFive.map(([n, ic]) => <SideButton key={n} name={n}>{ic}</SideButton>)}
          </div>
          <Grip />
          <div className="pb-[12px] pl-[7px] pt-[9px]">
            {rightGroupSix.map(([n, ic], i) => <SideButton key={n} name={n} off={i === 1 || i === 2}>{ic}</SideButton>)}
          </div>
          <Grip wide />
          <label className="ml-1 mt-[14px] flex items-center gap-[6px] whitespace-nowrap text-[17px] leading-[28px] text-[#a9a9b1] [text-shadow:1px_1px_0_#fff]">
            <input type="checkbox" disabled className="size-[18px] shrink-0 appearance-none border-2 border-[#77777f] bg-[#e3dfd8]" />
            Create Filter Capture
          </label>
        </aside>
      </div>

      <div role="toolbar" aria-label="Standard tools" className="relative flex h-[56px] shrink-0 border-b-2 border-[#60606a] bg-[linear-gradient(to_bottom,#ffffff_0px,#ffffff_4px,#e6e6f2_8px,#d0d0e6_13px,#d0d0e6_40px,#a8a8bc_54px)] pt-[6px]">
        {bottomGroups.map((group, g) => (
          <div key={g} className={["flex pl-[10px] pr-[15px]", "flex pr-[15px]", "flex pr-[18px]", "flex pr-[16px]", "flex"][g]}>
            <div className="h-[26px] w-[3px] shrink-0 border-b border-r-2 border-[#a4a4b4] bg-white" />
            <div className="flex pl-[9px]">
              {group.map((t) => (
                <button
                  key={t.name}
                  type="button"
                  aria-label={t.name}
                  disabled={t.off}
                  className={`relative flex h-[46px] items-start pl-[7px] pt-[9px] ${t.slim ? "w-[34px]" : t.caret ? "w-[45px]" : "w-[42px]"}`}
                >
                  {t.icon}
                  {t.caret && <span className="absolute right-1 top-[6px]"><Caret boxed={t.boxed} /></span>}
                </button>
              ))}
            </div>
          </div>
        ))}
        <svg role="img" aria-label="Dassault Systèmes CATIA" viewBox="0 0 64 54" className="absolute bottom-0 right-2 h-[54px] w-[64px]" fontFamily="Open Sans, sans-serif" fontStyle="italic">
          <path d="M16 2c20-4 19 8 3 14 7-7 12-13-3-14z" fill="#d8201c" stroke="#d8201c" strokeWidth="1" />
          <text x="3" y="34" fontSize="26" stroke="#3c3c6c" fill="#3c3c6c">D<tspan fill="#e0a018" stroke="#e0a018">S</tspan></text>
          <text x="13" y="47" fontSize="16" fontWeight="700" fill="#3c3c6c">CATIA</text>
        </svg>
      </div>

      <footer className="flex h-[31px] shrink-0 items-center pl-1">
        <p className="pt-px text-[17px]">Select an object or a command</p>
        <input type="text" aria-label="Power input" className="ml-auto h-[27px] w-[448px] self-end bg-white px-2 outline-none" />
        <div className="ml-[3px] flex h-full pt-[2px]">
          <button type="button" aria-label="Power input mode" className="flex w-[51px] justify-center border-l-2 border-r-2 border-t-2 border-l-white border-r-[#77777f] border-t-white pt-1">
            <svg width="26" height="22" fill="none" stroke="#a09f98" strokeWidth="2"><path d="M4 4h9v9H4zM17 14h2M2 20h21V1" className="drop-shadow-[1px_1px_0_#fff]" /></svg>
          </button>
          <button type="button" aria-label="Information" className="flex w-[48px] justify-center border-l-2 border-t-2 border-white pt-1">
            <svg width="26" height="22" fill="none" stroke="#a09f98" strokeWidth="2"><circle cx="12" cy="9" r="7" /><path d="M12 7v6M12 4v1M9 13h6M5 15l-2 5h20V1" className="drop-shadow-[1px_1px_0_#fff]" /></svg>
          </button>
        </div>
      </footer>

      <div className="pointer-events-none absolute bottom-[24px] left-1/2 z-10 -translate-x-1/2 select-none">
        <svg role="img" aria-label="مستقل mostaql.com" width="400" height="200" viewBox="0 0 400 200">
          <text x="200" y="121" textAnchor="middle" direction="rtl" fontSize="92" fontWeight="700" fill="#bcbbba" stroke="#bcbbba" strokeWidth="5" strokeLinejoin="round" opacity="0.55" fontFamily="DejaVu Sans, sans-serif">مستقل</text>
          <text x="200" y="184" textAnchor="middle" fontSize="56" fill="#9c9cac" fillOpacity="0.25" fontFamily="Lato, sans-serif">mostaql.com</text>
        </svg>
      </div>
    </div>
  );
}
